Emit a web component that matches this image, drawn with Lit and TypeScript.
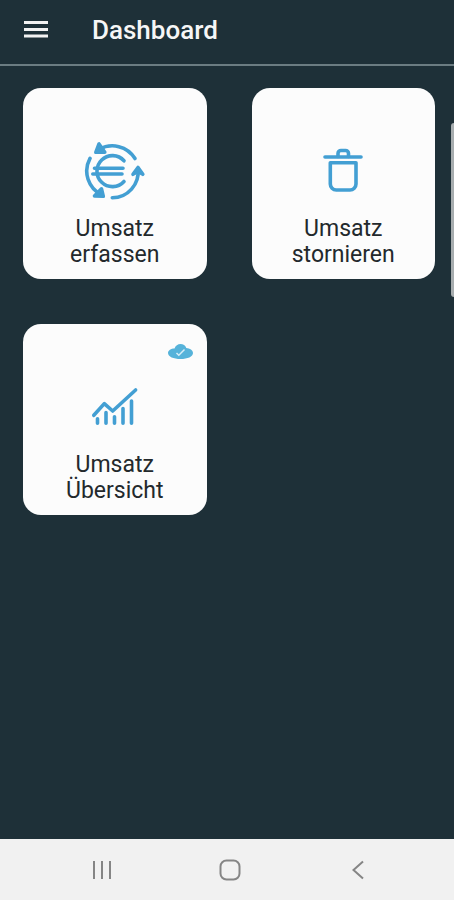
import { LitElement, html, svg, css, nothing } from "lit";
import type { TemplateResult } from "lit";
import { customElement } from "lit/decorators.js";

interface Tile {
  first: string;
  second: string;
  icon: TemplateResult;
  synced?: boolean;
}

const euroIcon = svg`
  <path d="M16 10.500A26.500 26.500 0 0 1 52 19.500"/>
  <path class="head" d="M16 5 12.800 13.300 21.800 13.300Z"/>
  <path d="M7 19.300A26.500 26.500 0 0 0 19 56"/>
  <path class="head" d="M18.500 49.800 20.300 57.300 11.500 57Z"/>
  <path d="M29.300 58.800A26 26 0 0 0 55 30"/>
  <path class="head" d="M50 35.300 55 28.500 59.800 35.300 55 32.500Z"/>
  <path d="M41 21.800A15.500 15.500 0 1 0 41 42.500"/>
  <path d="M11.500 29.300H40M9.800 35H39"/>`;

const trashIcon = svg`
  <path d="M14 18H50"/>
  <path d="M27 17.500V14.500a3 3 0 0 1 3-3h4.500a3 3 0 0 1 3 3v3"/>
  <path d="M19.300 23.800H45V45a6 6 0 0 1-6 6H25.300a6 6 0 0 1-6-6Z"/>`;

const chartIcon = svg`
  <path d="M10.800 40.300 21.300 28.600 29.700 36 52.600 15"/>
  <path d="M14.500 43.800V48.300M23 37.500V48.300M31.500 41.800V48.300M40 33.500V48.300M48.500 26V48.300"/>`;

const tiles: Tile[] = [
  { first: "Umsatz", second: "erfassen", icon: euroIcon },
  { first: "Umsatz", second: "stornieren", icon: trashIcon },
  { first: "Umsatz", second: "Übersicht", icon: chartIcon, synced: true },
];

@customElement("app-root")
export class AppRoot extends LitElement {
  static styles = css`
    :host {
      display: flex;
      flex-direction: column;
      position: relative;
      min-height: 100vh;
      background: #1e3038;
      font-family: Roboto, "Liberation Sans", sans-serif;
    }
    button {
      border: 0;
      margin: 0;
      padding: 0;
      background: none;
      font: inherit;
      color: inherit;
      cursor: pointer;
    }
    svg {
      display: block;
      fill: none;
    }
    .header {
      display: flex;
      align-items: center;
      gap: 44px;
      box-sizing: border-box;
      height: 66px;
      padding: 0 24px 5px;
      border-bottom: 2px solid #6b7c82;
      color: #f6f6f6;
    }
    .title {
      margin: 0;
      font-size: 26px;
      line-height: 32px;
      font-weight: 500;
    }
    .content {
      flex: 1;
      padding: 22px 19px 22px 23px;
    }
    .grid {
      display: grid;
      grid-template-columns: 1fr 1fr;
      gap: 45px;
    }
    .tile {
      position: relative;
      display: flex;
      flex-direction: column;
      align-items: center;
      gap: 13px;
      padding: 51px 12px 11px;
      border-radius: 18px;
      background: #fcfcfc;
      color: #23292c;
      font-size: 23px;
      line-height: 26px;
    }
    .icon {
      stroke: #439fd3;
      stroke-width: 3.6;
      stroke-linecap: round;
      stroke-linejoin: round;
    }
    .head {
      fill: #439fd3;
    }
    .line {
      display: block;
    }
    .cloud {
      position: absolute;
      top: 20px;
      right: 14px;
    }
    .edge-handle {
      position: absolute;
      top: 123px;
      right: 0;
      width: 3px;
      height: 174px;
      border-radius: 4px 0 0 4px;
      background: #a7adaf;
    }
    .nav {
      display: flex;
      justify-content: center;
      height: 60px;
      padding: 1px 0 0 5px;
      background: #f1f1f1;
    }
    .nav-button {
      display: grid;
      place-items: center;
      width: 128px;
    }
    .nav-icon {
      stroke: #858585;
      stroke-width: 2;
    }
  `;

  private renderTile(tile: Tile) {
    return html`
      <button class="tile" type="button">
        <svg class="icon" width="64" height="64" viewBox="0 0 64 64" aria-hidden="true">${tile.icon}</svg>
        <span>
          <span class="line">${tile.first}</span>
          <span class="line">${tile.second}</span>
        </span>
        ${tile.synced
          ? html`<svg class="cloud" width="25" height="15" viewBox="0 0 25 15" aria-hidden="true">
              <path fill="#56b3da" d="M6.500 4.500C7.500 1.500 9.800 0 12.500 0c2.700 0 5 1.500 5.800 4C21.800 4.300 25 6.300 25 9c0 3.800-5.500 6-12.500 6S0 12.800 0 9c0-2.700 3-4.500 6.500-4.500Z"/>
              <path stroke="#d8eef7" stroke-width="1.500" d="M8.500 9 10.800 11.200 16.500 5.500"/>
            </svg>`
          : nothing}
      </button>
    `;
  }

  render() {
    return html`
      <header class="header">
        <button type="button" aria-label="Menü">
          <svg width="24" height="18" viewBox="0 0 24 18">
            <path stroke="#f2f2f2" stroke-width="3" d="M0 1.500H24M0 8.500H24M0 15H24" />
          </svg>
        </button>
        <h1 class="title">Dashboard</h1>
      </header>
      <main class="content">
        <div class="grid">${tiles.map((tile) => this.renderTile(tile))}</div>
      </main>
      <div class="edge-handle"></div>
      <nav class="nav">
        <button class="nav-button" type="button" aria-label="Letzte Apps">
          <svg class="nav-icon" width="20" height="20" viewBox="0 0 20 20">
            <path d="M2 1V19M10 1V19M18 1V19" />
          </svg>
        </button>
        <button class="nav-button" type="button" aria-label="Startseite">
          <svg class="nav-icon" width="22" height="22" viewBox="0 0 22 22">
            <rect x="1.500" y="1.500" width="19" height="19" rx="6" />
          </svg>
        </button>
        <button class="nav-button" type="button" aria-label="Zurück">
          <svg class="nav-icon" width="12" height="20" viewBox="0 0 12 20">
            <path d="M11 1.500 1.500 10 11 18.500" />
          </svg>
        </button>
      </nav>
    `;
  }
}
